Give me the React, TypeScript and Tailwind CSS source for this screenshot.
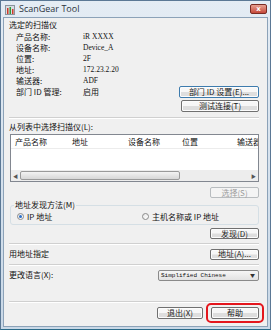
import type { ReactNode } from "react";
import clsx from "clsx";

function Btn({
  children,
  className,
  disabled = false,
  focused = false,
}: {
  children: ReactNode;
  className?: string;
  disabled?: boolean;
  focused?: boolean;
}) {
  return (
    <div
      className={clsx(
        "flex shrink-0 items-center justify-center rounded-[2px] border text-[8px] leading-none",
        disabled
          ? "border-[#b8bcbf] bg-[#f4f4f4] text-[#9c9c9c]"
          : "bg-linear-to-b from-[#f7f7f7] from-45% to-[#dedede] to-55% text-[#1b1b1b] shadow-[inset_0_0_0_1px_#fcfcfc]",
        !disabled && (focused ? "border-[#3d7bad]" : "border-[#707070]"),
        className,
      )}
    >
      {children}
    </div>
  );
}

function Separator({ className }: { className?: string }) {
  return <div className={clsx("h-[2px] border-t border-b border-t-[#d0d0d0] border-b-white", className)} />;
}

function Radio({ checked, label }: { checked?: boolean; label: string }) {
  return (
    <div className="flex items-center gap-[3px]">
      <span className="flex h-[7px] w-[7px] items-center justify-center rounded-full border border-[#8a8a8a] bg-linear-to-br from-[#e6e6e6] to-white">
        {checked ? <span className="h-[3px] w-[3px] rounded-full bg-[#2a6fc9]" /> : null}
      </span>
      <span>{label}</span>
    </div>
  );
}

const info: [string, string][] = [
  ["产品名称:", "iR XXXX"],
  ["设备名称:", "Device_A"],
  ["位置:", "2F"],
  ["地址:", "172.23.2.20"],
  ["输送器:", "ADF"],
  ["部门 ID 管理:", "启用"],
];

const columns: [string, string][] = [
  ["产品名称", "w-[57px]"],
  ["地址", "w-[56px]"],
  ["设备名称", "w-[54px]"],
  ["位置", "w-[55px]"],
  ["输送器", "flex-1"],
];

export default function App() {
  return (
    <div className="flex h-[330px] w-[271px] flex-col border border-[#5b7895] border-b-[#2b6b89] bg-linear-to-b from-[#e4ecf4] to-[#c9d8e7] font-['Noto_Sans_CJK_SC',sans-serif] text-[8px] text-[#111]">
      {/* title bar */}
      <div className="flex h-[16px] shrink-0 items-center pl-[4px] pr-[3px]">
        <svg width="11" height="11" viewBox="0 0 11 11" className="shrink-0">
          <rect x="0.5" y="1.5" width="9" height="9" fill="#d8dde2" stroke="#8a949e" />
          <rect x="2" y="4" width="1.5" height="6" fill="#d23a2a" />
          <rect x="4.5" y="3" width="1.5" height="7" fill="#2f9a3a" />
          <rect x="7" y="5" width="1.5" height="5" fill="#d23a2a" />
        </svg>
        <span className="ml-[3px] font-['Open_Sans',sans-serif] text-[9px] text-[#2c3440]">ScanGear Tool</span>
        <div className="ml-auto flex h-[10px] w-[17px] items-center justify-center rounded-[2px] border border-[#7a2b23] bg-linear-to-b from-[#e7a091] to-[#c4473a] font-['DejaVu_Sans',sans-serif] text-[7px] font-bold leading-none text-white">
          x
        </div>
      </div>

      {/* dialog body */}
      <div className="mx-[2px] mb-[2px] flex flex-1 flex-col border border-[#8ca2b8] bg-[#f0f0f0] pl-[5px] pr-[8px] pt-[1px]">
        <div className="flex justify-between">
          <div className="flex flex-col">
            <div className="flex h-[12px] items-center">选定的扫描仪</div>
            {info.map(([label, value]) => (
              <div key={label} className="flex h-[11px] items-center">
                <span className="w-[74px] pl-[7px]">{label}</span>
                <span
                  className={clsx(
                    label === "部门 ID 管理:" ? "" : "font-['Liberation_Serif',serif] text-[7.5px]",
                  )}
                >
                  {value}
                </span>
              </div>
            ))}
          </div>
          <div className="flex flex-col items-end gap-[2px] pt-[67px]">
            <Btn focused className="h-[12px] w-[80px]">
              部门 ID 设置(E)...
            </Btn>
            <Btn className="h-[12px] w-[78px]">测试连接(T)</Btn>
          </div>
        </div>

        <Separator className="mt-[5px]" />
        <div className="mt-[2px] flex h-[12px] items-center">从列表中选择扫描仪(L):</div>

        {/* scanner list */}
        <div className="ml-[1px] mt-[1px] flex h-[48px] flex-col border border-[#828790] bg-white">
          <div className="flex h-[14px] shrink-0 border-b border-[#ececec]">
            {columns.map(([name, w]) => (
              <div key={name} className={clsx("flex items-center overflow-hidden whitespace-nowrap pl-[4px]", w)}>
                {name}
              </div>
            ))}
          </div>
          <div className="flex-1" />
          <div className="flex h-[11px] shrink-0 items-center bg-[#ededed]">
            <div className="flex h-full w-[9px] items-center justify-center text-[5px] text-[#555]">◀</div>
            <div className="h-[9px] w-[160px] rounded-[2px] border border-[#9a9a9a] bg-linear-to-b from-[#f3f3f3] to-[#d7d7d7]" />
            <div className="flex-1" />
            <div className="flex h-full w-[9px] items-center justify-center text-[5px] text-[#555]">▶</div>
          </div>
        </div>

        <Btn disabled className="mt-[5px] h-[11px] w-[49px] self-end">
          选择(S)
        </Btn>

        {/* discovery method */}
        <fieldset className="ml-[1px] mt-[1px] rounded-[3px] border border-[#d5dfe5] pb-[2px]">
          <legend className="ml-[3px] h-[12px] px-[1px] leading-[12px]">地址发现方法(M)</legend>
          <div className="flex h-[11px] items-center">
            <div className="w-[131px] pl-[6px]">
              <Radio checked label="IP 地址" />
            </div>
            <Radio label="主机名称或 IP 地址" />
          </div>
        </fieldset>

        <Btn className="mt-[3px] h-[11px] w-[49px] self-end">发现(D)</Btn>
        <Separator className="mt-[4px]" />

        <div className="mt-[3px] flex h-[12px] items-center justify-between">
          <span>用地址指定</span>
          <Btn className="h-[11px] w-[49px]">地址(A)...</Btn>
        </div>

        <Separator className="mt-[4px]" />

        <div className="mt-[3px] flex h-[12px] items-center justify-between">
          <span>更改语言(X):</span>
          <div className="flex h-[11px] w-[101px] items-center rounded-[2px] border border-[#8a8a8a] bg-linear-to-b from-[#f6f6f6] to-[#e2e2e2] pl-[2px] pr-[3px]">
            <span className="font-['Liberation_Mono',monospace] text-[6px]">Simplified Chinese</span>
            <span className="ml-auto text-[5px] text-[#333]">▼</span>
          </div>
        </div>

        <Separator className="mt-[20px]" />

        <div className="flex items-center justify-end gap-[3px]">
          <Btn className="h-[12px] w-[46px]">退出(X)</Btn>
          <div className="-mr-[5px] rounded-[5px] border-2 border-[#e4161d] px-[3px] py-[2px]">
            <Btn className="h-[12px] w-[48px]">帮助</Btn>
          </div>
        </div>
      </div>
    </div>
  );
}
